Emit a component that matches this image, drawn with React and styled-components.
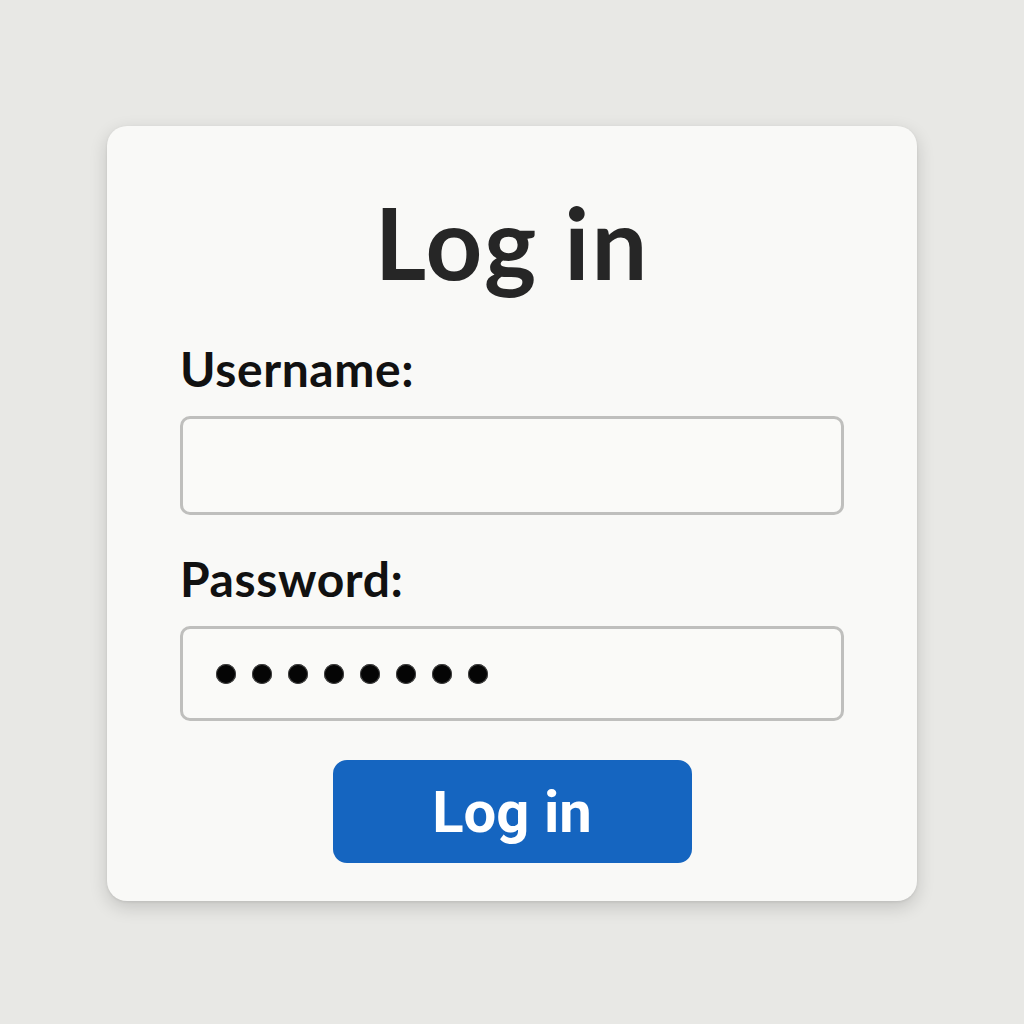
import styled, { createGlobalStyle } from 'styled-components'

const GlobalStyle = createGlobalStyle`
  html, body {
    margin: 0;
    padding: 0;
    background: #e8e8e5;
    font-family: Lato, "Open Sans", sans-serif;
  }
`

const Page = styled.div`
  width: 1024px;
  height: 1024px;
  padding: 126px 0 0 107px;
  box-sizing: border-box;
`

const Card = styled.form`
  width: 810px;
  height: 775px;
  box-sizing: border-box;
  padding: 67px 73px 0;
  background: #f9f9f7;
  border-radius: 20px;
  box-shadow: 0 6px 18px rgba(0, 0, 0, 0.16), 0 1px 3px rgba(0, 0, 0, 0.08);
  display: flex;
  flex-direction: column;
`

const Title = styled.h1`
  margin: 0 0 54px;
  font-size: 99px;
  line-height: 98px;
  font-weight: 700;
  letter-spacing: 2px;
  color: #262626;
  text-align: center;
`

const Label = styled.label`
  display: block;
  font-size: 48px;
  line-height: 48px;
  font-weight: 700;
  letter-spacing: 0.6px;
  color: #111;
  margin: ${({ $top }) => $top || 0}px 0 23px;
`

const Field = styled.div`
  height: ${({ $h }) => $h}px;
  box-sizing: border-box;
  border: 3px solid #bfbfbd;
  border-radius: 10px;
  background: #fafaf8;
  display: flex;
  align-items: center;
  gap: 16px;
  padding-left: 33px;
`

const Dot = styled.span`
  width: 20px;
  height: 20px;
  border-radius: 50%;
  background: #050505;
  box-shadow: 0 0 0 1px #444 inset;
`

const Button = styled.button`
  align-self: center;
  margin-top: 39px;
  width: 359px;
  height: 103px;
  border: none;
  border-radius: 14px;
  background: #1565c0;
  color: #fff;
  font-family: Roboto, "Open Sans", sans-serif;
  font-size: 58px;
  font-weight: 700;
  cursor: pointer;
`

export default function App() {
  return (
    <>
      <GlobalStyle />
      <Page>
        <Card onSubmit={(e) => e.preventDefault()}>
          <Title>Log in</Title>
          <Label>Username:</Label>
          <Field $h={99} />
          <Label $top={40}>Password:</Label>
          <Field $h={95}>
            {Array.from({ length: 8 }).map((_, i) => (
              <Dot key={i} />
            ))}
          </Field>
          <Button type="submit">Log in</Button>
        </Card>
      </Page>
    </>
  )
}
